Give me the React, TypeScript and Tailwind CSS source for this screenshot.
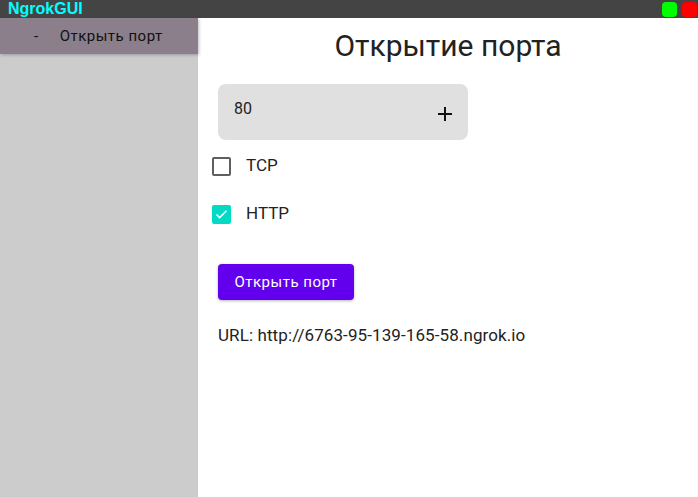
import { useState } from "react";

export default function App() {
  const [port, setPort] = useState("80");
  const [tcp, setTcp] = useState(false);
  const [http, setHttp] = useState(true);

  return (
    <div className="w-[698px] h-[497px] flex flex-col bg-white font-['Roboto',sans-serif] overflow-hidden">
      {/* Title bar */}
      <div className="h-[18px] bg-[#444444] flex items-center justify-between pl-[8px] pr-[1px]">
        <span className="font-['Liberation_Sans',Arial,sans-serif] font-bold text-[16px] text-[#00ffff] leading-none">
          NgrokGUI
        </span>
        <div className="flex gap-[5px]">
          <div className="w-[15px] h-[15px] rounded-[4px] bg-[#00ff00]" />
          <div className="w-[15px] h-[15px] rounded-[4px] bg-[#ff0000]" />
        </div>
      </div>

      <div className="flex flex-1 min-h-0">
        {/* Sidebar */}
        <div className="w-[198px] bg-[#cccccc] flex flex-col">
          <div className="h-[36px] bg-[#8c7f8c] flex items-center pl-[34px] text-[15px] tracking-[0.5px] text-[#111] shadow-[1px_1px_3px_rgba(0,0,0,0.25)]">
            <span>-</span>
            <span className="ml-[21px]">Открыть порт</span>
          </div>
        </div>

        {/* Main */}
        <div className="flex-1 flex flex-col">
          <h1 className="text-center text-[30px] text-[#222] leading-none mt-[13px]">
            Открытие порта
          </h1>

          <div className="ml-[20px] mt-[23px] w-[250px] h-[56px] bg-[#e0e0e0] rounded-[8px] flex items-center justify-between pl-[16px] pr-[14px]">
            <input
              value={port}
              onChange={(e) => setPort(e.target.value)}
              className="bg-transparent outline-none text-[16px] text-[#222] w-[150px] -mt-[7px]"
            />
            <svg width="18" height="18" viewBox="0 0 18 18" className="mt-[4px]">
              <path d="M9 2v14M2 9h14" stroke="#111" strokeWidth="2" />
            </svg>
          </div>

          <label className="flex items-center ml-[14px] mt-[16px] h-[20px] cursor-pointer">
            <button
              onClick={() => setTcp(!tcp)}
              className={
                tcp
                  ? "w-[19px] h-[19px] rounded-[2px] bg-[#03dac6] flex items-center justify-center"
                  : "w-[19px] h-[19px] rounded-[2px] border-2 border-[#5f5f5f]"
              }
            >
              {tcp && (
                <svg width="15" height="15" viewBox="0 0 24 24" fill="none" stroke="white" strokeWidth="2.5">
                  <path d="M4 12l5 5L20 6" />
                </svg>
              )}
            </button>
            <span className="ml-[15px] text-[17px] text-[#222]">TCP</span>
          </label>

          <label className="flex items-center ml-[14px] mt-[28px] h-[20px] cursor-pointer">
            <button
              onClick={() => setHttp(!http)}
              className={
                http
                  ? "w-[19px] h-[19px] rounded-[2px] bg-[#03dac6] flex items-center justify-center"
                  : "w-[19px] h-[19px] rounded-[2px] border-2 border-[#5f5f5f]"
              }
            >
              {http && (
                <svg width="15" height="15" viewBox="0 0 24 24" fill="none" stroke="white" strokeWidth="2.5">
                  <path d="M4 12l5 5L20 6" />
                </svg>
              )}
            </button>
            <span className="ml-[15px] text-[17px] text-[#222]">HTTP</span>
          </label>

          <button className="ml-[20px] mt-[40px] w-[136px] h-[36px] bg-[#6200ee] rounded-[4px] text-white text-[15px] tracking-[0.5px] shadow-[0_1px_3px_rgba(0,0,0,0.3)]">
            Открыть порт
          </button>

          <div className="ml-[20px] mt-[27px] text-[17px] tracking-[0.1px] leading-none text-[#222]">
            URL: http://6763-95-139-165-58.ngrok.io
          </div>
        </div>
      </div>
    </div>
  );
}
